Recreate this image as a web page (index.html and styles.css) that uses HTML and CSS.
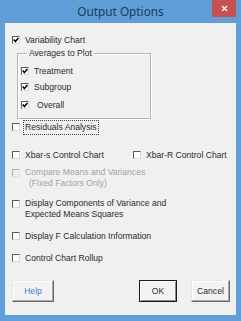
FILE: index.html
```html
<!DOCTYPE html>
<html lang="en">
<head>
  <meta charset="UTF-8">
  <title>Output Options</title>
  <link rel="stylesheet" href="styles.css">
</head>
<body>
  <div class="window">
    <div class="titlebar">
      <span></span>
      <h1 class="title">Output Options</h1>
      <button class="close" type="button">
        <svg width="7" height="7" viewBox="0 0 7 7"><path d="M1 1 L6 6 M6 1 L1 6" stroke="#fff" stroke-width="1.4"/></svg>
      </button>
    </div>

    <div class="client">
      <label class="opt opt-variability">
        <span class="box checked"><svg viewBox="0 0 6 6"><path d="M0.7 2.6 L2.4 4.5 L5.4 0.9" /></svg></span>
        <span class="text">Variability Chart</span>
      </label>

      <fieldset class="group">
        <legend>Averages to Plot</legend>
        <label class="opt opt-treatment">
          <span class="box checked"><svg viewBox="0 0 6 6"><path d="M0.7 2.6 L2.4 4.5 L5.4 0.9" /></svg></span>
          <span class="text">Treatment</span>
        </label>
        <label class="opt opt-subgroup">
          <span class="box checked"><svg viewBox="0 0 6 6"><path d="M0.7 2.6 L2.4 4.5 L5.4 0.9" /></svg></span>
          <span class="text">Subgroup</span>
        </label>
        <label class="opt opt-overall">
          <span class="box checked"><svg viewBox="0 0 6 6"><path d="M0.7 2.6 L2.4 4.5 L5.4 0.9" /></svg></span>
          <span class="text indent">Overall</span>
        </label>
      </fieldset>

      <label class="opt opt-residuals">
        <span class="box"></span>
        <span class="text focus">Residuals Analysis</span>
      </label>

      <div class="pair">
        <label class="opt">
          <span class="box"></span>
          <span class="text">Xbar-s Control Chart</span>
        </label>
        <label class="opt">
          <span class="box"></span>
          <span class="text">Xbar-R Control Chart</span>
        </label>
      </div>

      <label class="opt multi disabled opt-compare">
        <span class="box"></span>
        <span class="text">
          <span class="line">Compare Means and Variances</span>
          <span class="line sub">(Fixed Factors Only)</span>
        </span>
      </label>

      <label class="opt multi opt-components">
        <span class="box"></span>
        <span class="text">
          <span class="line">Display Components of Variance and</span>
          <span class="line">Expected Means Squares</span>
        </span>
      </label>

      <label class="opt opt-fcalc">
        <span class="box"></span>
        <span class="text">Display F Calculation Information</span>
      </label>

      <label class="opt opt-rollup">
        <span class="box"></span>
        <span class="text">Control Chart Rollup</span>
      </label>

      <div class="buttons">
        <button class="btn btn-help" type="button">Help</button>
        <button class="btn btn-ok" type="button">OK</button>
        <button class="btn btn-cancel" type="button">Cancel</button>
      </div>
    </div>
  </div>
</body>
</html>
```

FILE: styles.css
```css
* {
  margin: 0;
  padding: 0;
  box-sizing: border-box;
}

body {
  width: 241px;
  height: 321px;
  overflow: hidden;
  background: #5f9ed8;
  font-family: "Liberation Sans", Arial, sans-serif;
  font-size: 8.6px;
  color: #2b2b2b;
}

.window {
  height: 321px;
  padding: 0 5px 6px 5px;
  display: flex;
  flex-direction: column;
}

/* title bar */
.titlebar {
  height: 23px;
  display: grid;
  grid-template-columns: 1fr auto 1fr;
  align-items: start;
}

.title {
  font-family: "Noto Sans", sans-serif;
  font-weight: 400;
  font-size: 11.8px;
  line-height: 23px;
  color: #243a56;
}

.close {
  justify-self: end;
  width: 24px;
  height: 17px;
  border: none;
  background: #c8504d;
  display: flex;
  align-items: center;
  justify-content: center;
}

/* client area */
.client {
  flex: 1;
  background: #f0f0f0;
  display: flex;
  flex-direction: column;
}

.opt {
  display: flex;
  align-items: center;
  height: 12px;
  padding-left: 7px;
  line-height: 11px;
  white-space: nowrap;
}

.box {
  width: 8px;
  height: 8px;
  flex: none;
  background: #fff;
  border: 1px solid;
  border-color: #5a5a5a #d8d8d8 #d8d8d8 #5a5a5a;
  margin-right: 5px;
  display: flex;
}

.box svg {
  width: 6px;
  height: 6px;
}

.box svg path {
  fill: none;
  stroke: #000;
  stroke-width: 1.5;
}

.indent {
  padding-left: 3px;
}

.focus {
  outline: 1px dotted #444;
  outline-offset: 1px;
}

.opt-variability {
  margin-top: 11px;
}

/* group box */
.group {
  margin: 2px 0 0 12px;
  width: 134px;
  height: 71px;
  border: 1px solid #b4b4b4;
  box-shadow: inset 1px 1px 0 #fff, 1px 1px 0 #fff;
  padding: 0;
}

.group legend {
  margin-left: 9px;
  padding: 0 2px;
  line-height: 11px;
}

.group .opt {
  padding-left: 3px;
}

.opt-treatment {
  margin-top: 6px;
}

.opt-subgroup {
  margin-top: 4px;
}

.opt-overall {
  margin-top: 6px;
}

.opt-residuals {
  margin-top: 2px;
}

.pair {
  margin-top: 16px;
  display: grid;
  grid-template-columns: 121px auto;
}

.multi {
  height: 22px;
  align-items: flex-start;
}

.multi .box {
  margin-top: 2px;
}

.line {
  display: block;
}

.line.sub {
  padding-left: 4px;
}

.disabled {
  color: #a3a3a3;
}

.disabled .box {
  background: #f0f0f0;
  border-color: #b0b0b0 #e4e4e4 #e4e4e4 #b0b0b0;
}

.opt-compare {
  margin-top: 6px;
}

.opt-components {
  margin-top: 9px;
}

.opt-fcalc {
  margin-top: 10px;
}

.opt-rollup {
  margin-top: 10px;
}

/* buttons */
.buttons {
  margin-top: 16px;
  display: flex;
  padding: 0 6px 0 7px;
}

.btn {
  height: 22px;
  font-family: inherit;
  font-size: 8.6px;
  color: #2b2b2b;
  background: #f3f3f3;
  border: 1px solid;
  border-color: #e8e8e8 #6a6a6a #6a6a6a #e8e8e8;
  box-shadow: inset -1px -1px 0 #a8a8a8, inset 1px 1px 0 #fff;
}

.btn-help {
  width: 42px;
  color: #3b80d8;
}

.btn-ok {
  width: 38px;
  margin-left: auto;
  margin-right: 14px;
  border-color: #1a1a1a;
  box-shadow: inset 1px 1px 0 #fff, inset -1px -1px 0 #8a8a8a;
}

.btn-cancel {
  width: 39px;
}
```
